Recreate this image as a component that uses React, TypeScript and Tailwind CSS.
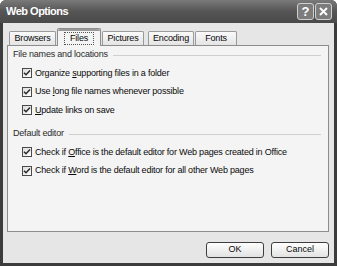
const font = { fontFamily: '"Liberation Sans", Arial, sans-serif' };

function Check({ children }: { children: React.ReactNode }) {
  return (
    <div className="flex h-[18.5px] items-center pl-[9px]">
      <div className="flex h-[10px] w-[10px] items-center justify-center border border-[#4a4a4a] bg-gradient-to-br from-[#dcdcdc] to-white">
        <svg width="8" height="8" viewBox="0 0 8 8">
          <path d="M1 3.8 L3 5.8 L7 1.6" fill="none" stroke="#2a2a2a" strokeWidth="1.5" />
        </svg>
      </div>
      <span className="ml-[3px] text-[9px] tracking-[-0.2px] text-[#0a0a0a]">{children}</span>
    </div>
  );
}

function GroupHead({ label }: { label: string }) {
  return (
    <div className="flex h-[12px] items-center">
      <span className="text-[9px] tracking-[-0.2px] text-[#2a2a2a]">{label}</span>
      <div className="ml-[5px] h-px flex-1 bg-[#cfcfcf]" />
    </div>
  );
}

function Tab({ label, active, w }: { label: string; active?: boolean; w: number }) {
  if (active)
    return (
      <div
        className="relative z-10 -mb-px flex h-[18px] items-center justify-center rounded-t-[2px] border border-b-0 border-[#8c8c8c] bg-[#f4f4f4]"
        style={{ width: w }}
      >
        <div className="absolute inset-x-0 top-0 h-[2px] rounded-t-[2px] bg-[#9a9a9a]" />
        <span className="mt-[1px] border border-dotted border-[#555] px-[5px] text-[9px] leading-[11px] tracking-[-0.2px] text-[#0a0a0a]">
          {label}
        </span>
      </div>
    );
  return (
    <div
      className="mt-[3px] flex h-[14px] items-center justify-center rounded-t-[2px] border border-b-0 border-[#9a9a9a] bg-gradient-to-b from-[#fafafa] to-[#e4e4e4] text-[9px] tracking-[-0.2px] text-[#0a0a0a]"
      style={{ width: w }}
    >
      {label}
    </div>
  );
}

function Btn({ label }: { label: string }) {
  return (
    <div className="flex h-[16px] w-[58px] items-center justify-center rounded-[3px] border border-[#3e3e3e] bg-gradient-to-b from-white to-[#e2e2e2] text-[9px] text-[#0a0a0a]">
      {label}
    </div>
  );
}

export default function App() {
  return (
    <div className="h-[266px] w-[337px] overflow-hidden bg-white" style={font}>
      <div className="flex h-full w-full flex-col rounded-t-[6px] bg-[#3c3c3c]">
        {/* title bar */}
        <div className="flex h-[23px] items-center rounded-t-[6px] bg-gradient-to-b from-[#7a7a7a] via-[#555] to-[#4a4a4a] pl-[6px] pr-[5px]">
          <span className="text-[11px] font-bold tracking-[-0.5px] text-white">Web Options</span>
          <div className="ml-auto flex gap-[1px]">
            <div className="flex h-[17px] w-[17px] items-center justify-center rounded-[3px] border border-[#d0d0d0] bg-[#7c7c7c] text-[13px] font-bold leading-none text-white">
              ?
            </div>
            <div className="flex h-[17px] w-[17px] items-center justify-center rounded-[3px] border border-[#d0d0d0] bg-[#7c7c7c]">
              <svg width="11" height="11" viewBox="0 0 11 11">
                <path d="M2 2 L9 9 M9 2 L2 9" stroke="white" strokeWidth="2" />
              </svg>
            </div>
          </div>
        </div>

        {/* client */}
        <div className="mx-[3px] mb-[3px] flex flex-1 flex-col bg-[#e6e6e6] pl-[4px] pr-[5px] pt-[5px]">
          <div className="flex items-end gap-[1px] pl-[2px]">
            <Tab label="Browsers" w={47} />
            <Tab label="Files" active w={44} />
            <Tab label="Pictures" w={42} />
            <div className="w-[2px]" />
            <Tab label="Encoding" w={46} />
            <Tab label="Fonts" w={42} />
          </div>
          <div className="flex h-[187px] flex-col border border-[#8c8c8c] bg-[#f4f4f4] pl-[5px] pr-[7px] pt-[3px]">
            <GroupHead label="File names and locations" />
            <div className="mt-[3px]">
              <Check>
                Organize <u>s</u>upporting files in a folder
              </Check>
              <Check>
                Use <u>l</u>ong file names whenever possible
              </Check>
              <Check>
                <u>U</u>pdate links on save
              </Check>
            </div>
            <div className="mt-[8.5px]">
              <GroupHead label="Default editor" />
            </div>
            <div className="mt-[3px]">
              <Check>
                Check if <u>O</u>ffice is the default editor for Web pages created in Office
              </Check>
              <Check>
                Check if <u>W</u>ord is the default editor for all other Web pages
              </Check>
            </div>
          </div>
          <div className="mt-[10px] flex justify-end gap-[7px]">
            <Btn label="OK" />
            <Btn label="Cancel" />
          </div>
        </div>
      </div>
    </div>
  );
}
